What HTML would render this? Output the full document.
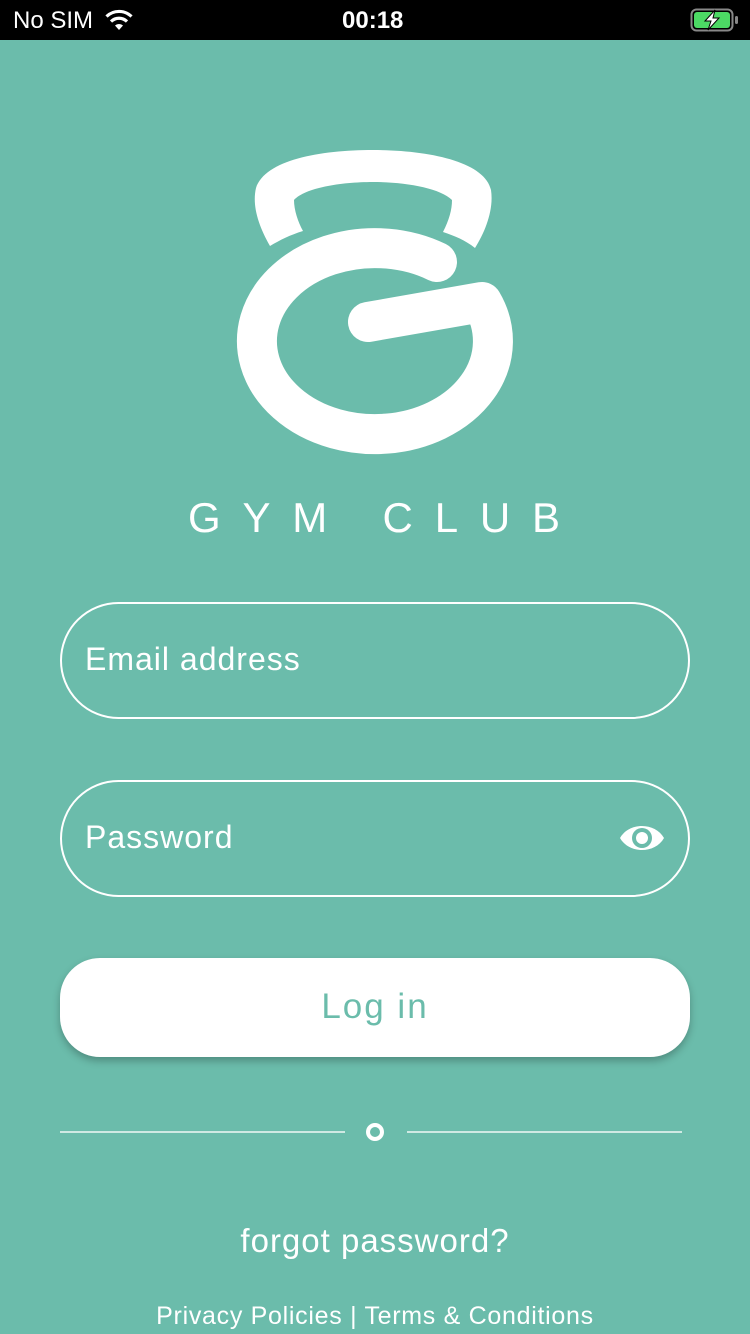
<!DOCTYPE html>
<html><head><meta charset="utf-8"><style>
*{margin:0;padding:0;box-sizing:border-box}
body{width:750px;height:1334px;background:#6bbcab;font-family:"Liberation Sans",sans-serif;position:relative;overflow:hidden;color:#fff}
.sb{position:absolute;left:0;top:0;width:750px;height:40px;background:#000;color:#fff;font-size:24px}
.abs{position:absolute}
.field{position:absolute;left:60px;width:630px;height:117px;border:2px solid #fff;border-radius:59px;font-size:32px;letter-spacing:1px;padding-left:23px;line-height:111px}
.btn{position:absolute;left:60px;top:958px;width:630px;height:99px;background:#fff;border-radius:40px;color:#6bbcab;font-size:35px;text-align:center;line-height:97px;box-shadow:0 4px 8px rgba(0,0,0,0.25);letter-spacing:2px}
</style></head><body>
<div class="sb">
<span class="abs" style="left:13px;top:7px">No SIM</span>
<svg class="abs" style="left:104px;top:9px" width="30" height="22" viewBox="0 0 30 22"><path d="M15 21 L11 16.5 A6 6 0 0 1 19 16.5Z" fill="#fff"/><path d="M7 12.5 A11.5 11.5 0 0 1 23 12.5" stroke="#fff" stroke-width="3.2" fill="none"/><path d="M2.5 7.5 A18 18 0 0 1 27.5 7.5" stroke="#fff" stroke-width="3.2" fill="none"/></svg>
<span class="abs" style="left:342px;top:7px;font-weight:bold">00:18</span>
<svg class="abs" style="left:690px;top:8px" width="50" height="24" viewBox="0 0 50 24"><rect x="1.5" y="1.5" width="41" height="21" rx="5" fill="none" stroke="#888" stroke-width="2"/><rect x="4" y="4" width="36" height="16" rx="3" fill="#4cd964"/><rect x="45" y="8" width="3" height="8" rx="1.5" fill="#888"/><path d="M25 2 L15 13 H21 L18 22 L29 10 H23 Z" fill="#fff" stroke="#000" stroke-width="1"/></svg>
</div>
<svg class="abs" style="left:0;top:0" width="750" height="560" viewBox="0 0 750 560">
<path d="M270 246 C258 225 252 205 256 188 C265 160 320 150 373 150 C430 150 485 162 491 190 C494 210 485 232 475 248 C465 240 455 236 443 232 C449 220 452 210 452 200 C440 188 405 182 373 182 C340 182 305 188 294 200 C294 210 298 222 303 231 C290 235 280 240 270 246 Z" fill="#fff"/>
<path d="M437 262 A118 93 0 1 0 482 302 L368 322" fill="none" stroke="#fff" stroke-width="40" stroke-linecap="round" stroke-linejoin="round"/>
<text x="188" y="532" textLength="372" lengthAdjust="spacing" font-family="Liberation Sans, sans-serif" font-size="42" fill="#fff">GYM CLUB</text>
</svg>
<div class="field" style="top:602px">Email address</div>
<div class="field" style="top:780px">Password</div>
<svg class="abs" style="left:619px;top:821px" width="46" height="34" viewBox="0 0 46 34"><path d="M1 17 C10 1 36 1 45 17 C36 33 10 33 1 17Z" fill="#fff"/><circle cx="23" cy="17" r="10" fill="#6bbcab"/><circle cx="23" cy="17" r="6" fill="#fff"/></svg>
<div class="btn">Log in</div>
<div class="abs" style="left:60px;top:1131px;width:285px;height:2px;background:#cfe9e3"></div>
<div class="abs" style="left:407px;top:1131px;width:275px;height:2px;background:#cfe9e3"></div>
<div class="abs" style="left:366px;top:1123px;width:18px;height:18px;border:4px solid #fff;border-radius:50%"></div>
<div class="abs" style="left:0;top:1222px;width:750px;text-align:center;font-size:33px;letter-spacing:1px">forgot password?</div>
<div class="abs" style="left:0;top:1302px;width:750px;text-align:center;font-size:25px;letter-spacing:0.7px">Privacy Policies | Terms &amp; Conditions</div>
</body></html>
